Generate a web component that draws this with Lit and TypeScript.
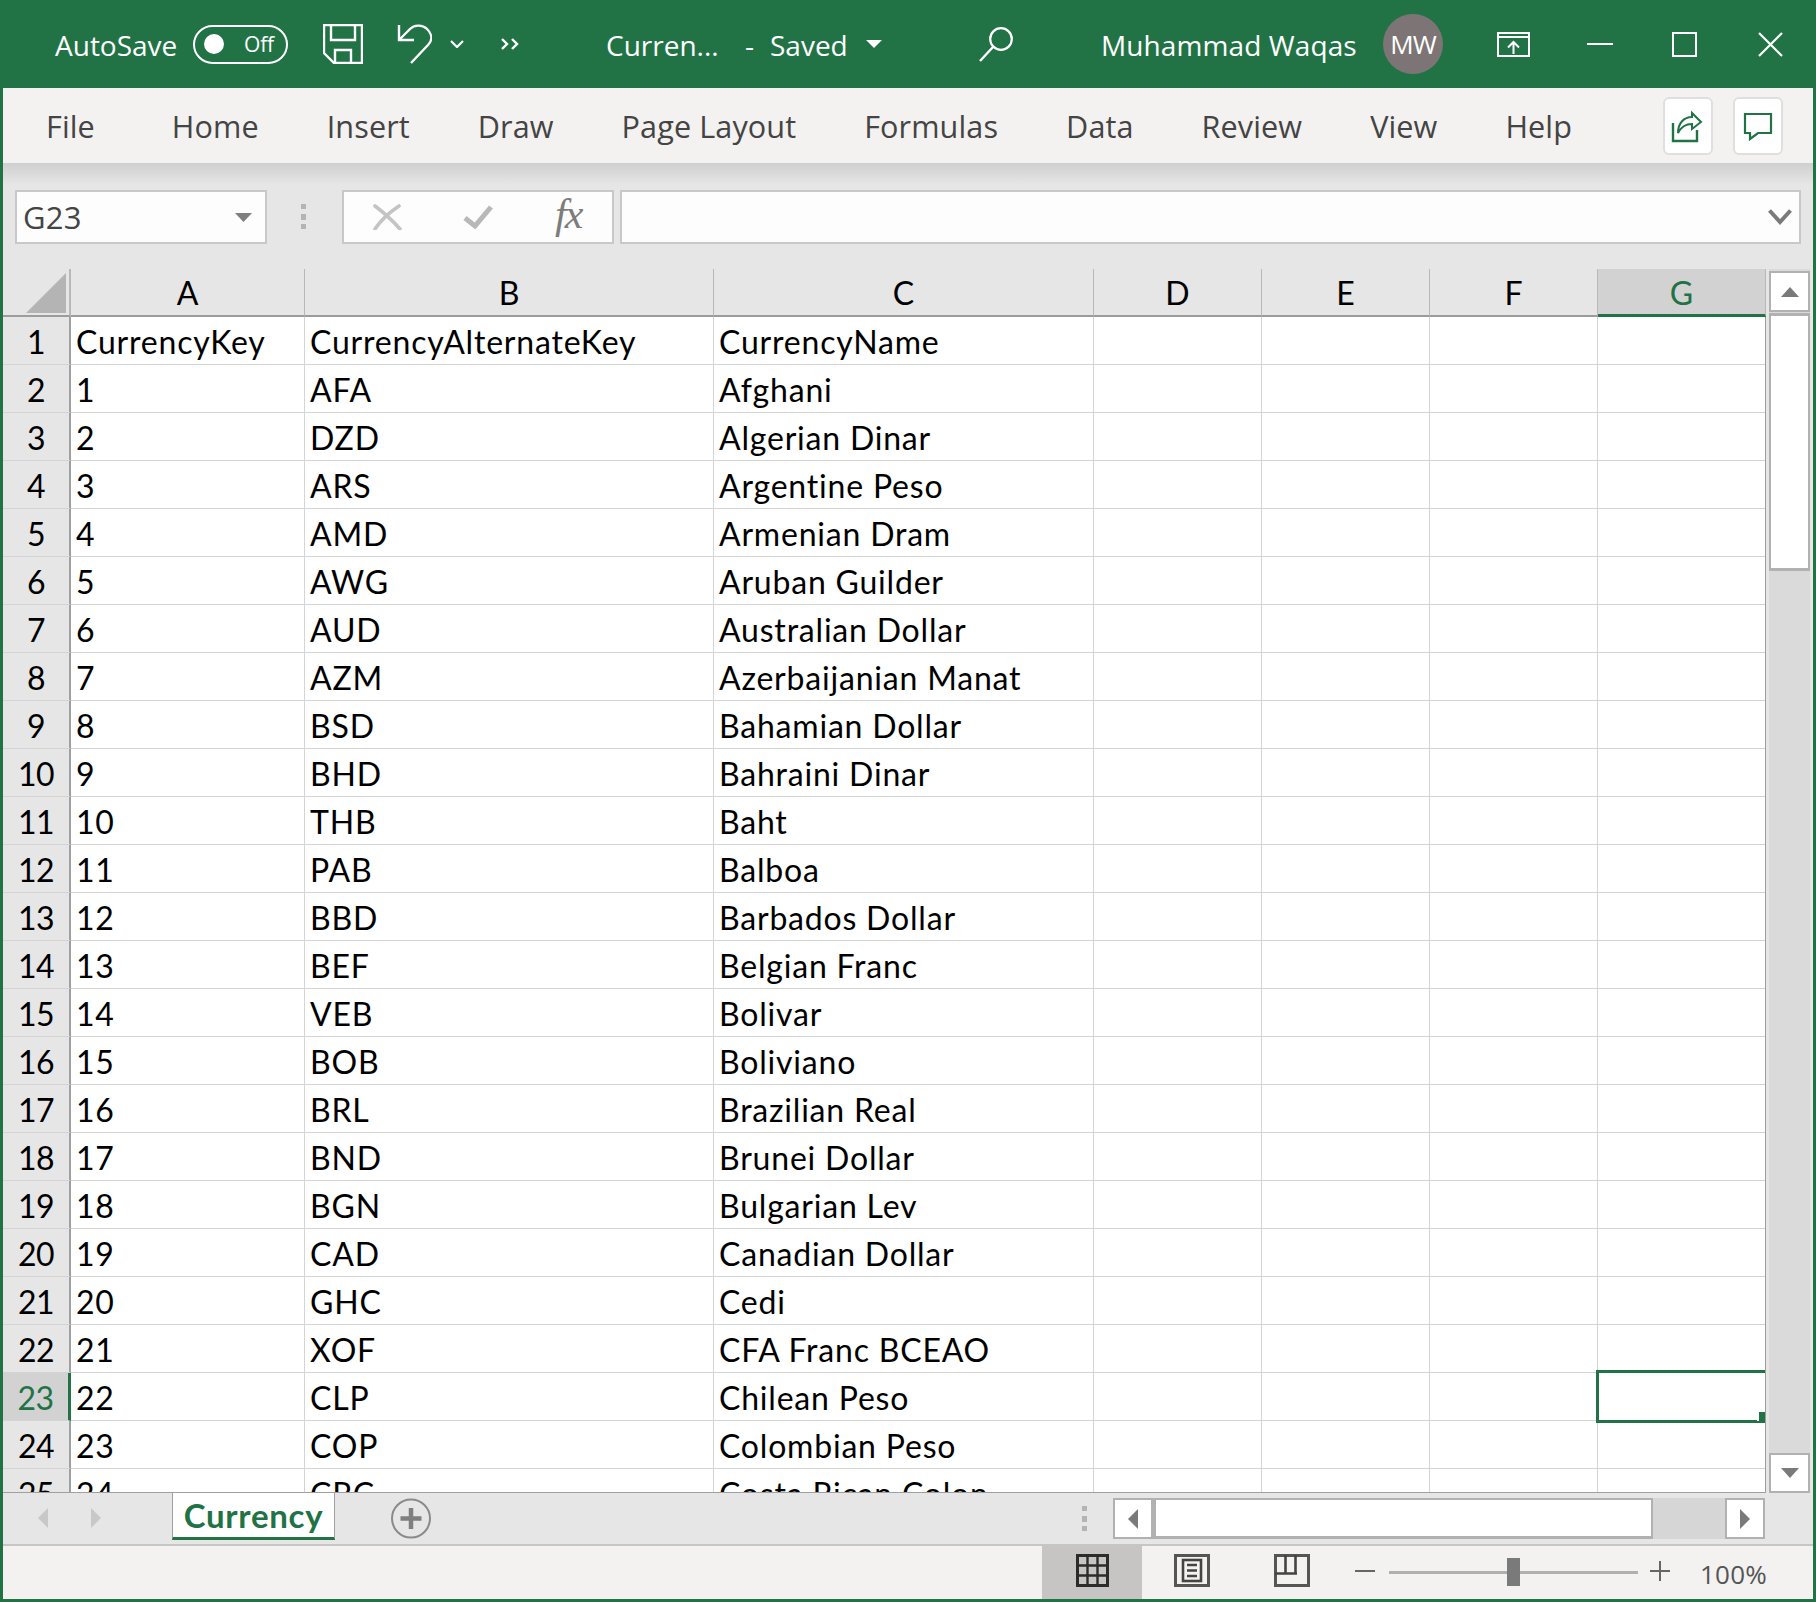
import { LitElement, html, css, svg } from "lit";
import { customElement } from "lit/decorators.js";

const ROWS: [string, string, string][] = [
  ["CurrencyKey", "CurrencyAlternateKey", "CurrencyName"],
  ["1", "AFA", "Afghani"],
  ["2", "DZD", "Algerian Dinar"],
  ["3", "ARS", "Argentine Peso"],
  ["4", "AMD", "Armenian Dram"],
  ["5", "AWG", "Aruban Guilder"],
  ["6", "AUD", "Australian Dollar"],
  ["7", "AZM", "Azerbaijanian Manat"],
  ["8", "BSD", "Bahamian Dollar"],
  ["9", "BHD", "Bahraini Dinar"],
  ["10", "THB", "Baht"],
  ["11", "PAB", "Balboa"],
  ["12", "BBD", "Barbados Dollar"],
  ["13", "BEF", "Belgian Franc"],
  ["14", "VEB", "Bolivar"],
  ["15", "BOB", "Boliviano"],
  ["16", "BRL", "Brazilian Real"],
  ["17", "BND", "Brunei Dollar"],
  ["18", "BGN", "Bulgarian Lev"],
  ["19", "CAD", "Canadian Dollar"],
  ["20", "GHC", "Cedi"],
  ["21", "XOF", "CFA Franc BCEAO"],
  ["22", "CLP", "Chilean Peso"],
  ["23", "COP", "Colombian Peso"],
  ["24", "CRC", "Costa Rican Colon"],
];
const COLS = ["A", "B", "C", "D", "E", "F", "G"];

const icon = (w: number, h: number, body: unknown, cls = "") =>
  html`<svg class=${cls} width=${w} height=${h} viewBox="0 0 ${w} ${h}" fill="none">${body}</svg>`;

const W = "#fff";
const G = "#217346";

@customElement("app-root")
export class AppRoot extends LitElement {
  static styles = css`
    :host { display: block; width: 1816px; height: 1602px; }
    svg { display: block; flex: none; }
    .app {
      box-sizing: border-box; width: 1816px; height: 1602px;
      border: solid #217346;
      border-width: 0 3px 3px 3px;
      background: #e6e6e6; display: flex; flex-direction: column; overflow: hidden;
      font-family: "Open Sans", "Noto Sans", sans-serif;
    }
    /* title bar */
    .title { height: 88px; flex: none; background: #217346; color: #fff; display: flex; align-items: center; font-size: 28px; white-space: nowrap; }
    .title > span { display: block; flex: none; margin-top: 2px; }
    .auto { margin-left: 52px; width: 138px; }
    .toggle { box-sizing: border-box; width: 95px; height: 39px; border: 2px solid #fff; border-radius: 20px; display: flex; align-items: center; padding-left: 9px; flex: none; }
    .knob { width: 20px; height: 20px; border-radius: 50%; background: #fff; flex: none; }
    .off { font-size: 21px; margin-left: 20px; letter-spacing: -0.2px; }
    .save { margin-left: 35px; }
    .undo { margin-left: 34px; }
    .chev { margin-left: 18px; }
    .more { margin-left: 37px; }
    .doc { margin-left: 87px; width: 139px; }
    .dash { width: 25px; }
    .saved { width: 96px; }
    .search { margin-left: 97px; margin-top: 1px; }
    .name { margin-left: 88px; width: 282px; letter-spacing: 0.1px; }
    .avatar { width: 60px; height: 60px; border-radius: 50%; background: #7d7575; display: flex; align-items: center; justify-content: center; font-size: 26px; flex: none; letter-spacing: -1px; }
    .rd { margin-left: 54px; }
    .min { margin-left: 57px; }
    .max { margin-left: 59px; }
    .close { margin-left: 61px; }
    /* ribbon */
    .ribbon { height: 75px; flex: none; background: #f3f2f1; display: flex; align-items: center; padding: 0 30px 0 43px; color: #444; font-size: 30.6px; white-space: nowrap; box-sizing: border-box; }
    .tabs { display: flex; gap: 68px; margin-top: 1px; letter-spacing: 0.1px; }
    .tabs span:first-child { margin-right: 9px; }
    .rbtns { margin-left: auto; display: flex; gap: 20px; }
    .rbtn { box-sizing: border-box; width: 50px; height: 58px; background: #fff; border: 2px solid #e1dfdd; border-radius: 6px; flex: none; }
    .rbtn svg { margin: -2px; }
    /* formula bar */
    .fbar { height: 106px; flex: none; box-sizing: border-box; padding: 27px 12px 25px 12px; display: flex; background: linear-gradient(#cfcfcf 0, #e6e6e6 22px); }
    .box { box-sizing: border-box; height: 54px; background: #fdfdfd; border: 2px solid #c8c8c8; flex: none; display: flex; align-items: center; }
    .namebox { width: 252px; padding-left: 6px; font-size: 31px; color: #444; }
    .namebox .txt { flex: 1; letter-spacing: 0.2px; }
    .namebox svg { margin-right: 13px; }
    .vdots { margin-left: 34px; margin-top: 14px; }
    .fxbox { width: 272px; margin-left: 36px; }
    .fxbox .x { margin-left: 29px; }
    .fxbox .ok { margin-left: 61px; }
    .fx { font-family: "Liberation Serif", serif; font-style: italic; font-size: 42px; color: #7c7c7c; margin-left: 62px; line-height: 1; margin-top: -6px; letter-spacing: -2px; }
    .finput { flex: 1; margin-left: 6px; justify-content: flex-end; padding-right: 7px; }
    /* sheet */
    .sheet { height: 1224px; flex: none; display: flex; }
    .gridwrap { width: 1763px; height: 1224px; overflow: hidden; position: relative; flex: none; }
    .grid { display: grid; grid-template-columns: 68px 234px 409px 380px 168px 168px 168px 168px; grid-auto-rows: 48px; background: #fff; font-family: Lato, "Open Sans", sans-serif; font-size: 32px; color: #000; }
    .gc { box-sizing: border-box; border-right: 1px solid #d4d4d4; border-bottom: 1px solid #d4d4d4; display: flex; align-items: center; padding: 1px 0 0 5px; white-space: nowrap; overflow: hidden; letter-spacing: 0.8px; }
    .rh { box-sizing: border-box; background: #e6e6e6; border-right: 2px solid #a0a0a0; border-bottom: 1px solid #d4d4d4; display: flex; align-items: center; justify-content: center; padding-top: 1px; letter-spacing: -0.5px; }
    .rh.sel { background: #d2d2d2; color: #217346; border-right: 3px solid #217346; }
    .ch { box-sizing: border-box; background: #e6e6e6; border-right: 1px solid #b8b8b8; border-bottom: 2px solid #9c9c9c; display: flex; align-items: center; justify-content: center; padding-top: 1px; }
    .ch.corner { border-right: 2px solid #b8b8b8; align-items: flex-start; justify-content: flex-start; padding: 4px 0 0 23px; }
    .ch.sel { background: #d2d2d2; color: #217346; border-bottom: 3px solid #217346; }
    .ch:last-child { border-right: 1px solid #9c9c9c; }
    .gline { position: absolute; left: 1762px; top: 48px; bottom: 0; width: 1px; background: #9c9c9c; }
    .cellsel { position: absolute; left: 1593px; top: 1101px; width: 169px; height: 53px; box-sizing: border-box; border: 3px solid #217346; border-right: 0; }
    .handle { position: absolute; right: 0; bottom: -1px; width: 6px; height: 9px; background: #217346; border-left: 2px solid #fff; }
    .gridbottom { position: absolute; left: 0; right: 0; bottom: 0; height: 1px; background: #a0a0a0; }
    /* v scroll */
    .vs { margin-left: 3px; width: 41px; display: flex; flex-direction: column; background: #dadada; padding-top: 2px; box-sizing: border-box; height: 1224px; flex: none; }
    .sb { box-sizing: border-box; background: #fff; border: 2px solid #b1b1b1; display: flex; align-items: center; justify-content: center; flex: none; }
    .vs .up { height: 41px; }
    .vs .thumb { height: 258px; margin-top: 1px; border-width: 3px 2px; }
    .vs .down { height: 40px; margin-top: auto; }
    /* tabs */
    .sheets { height: 53px; flex: none; box-sizing: border-box; border-bottom: 2px solid #c8c6c4; display: flex; align-items: flex-start; background: #e6e6e6; }
    .nav1 { margin: 15px 0 0 35px; }
    .nav2 { margin: 15px 0 0 43px; }
    .stab { margin-left: 71px; box-sizing: border-box; width: 163px; height: 47px; background: #fff; border: solid #a0a0a0; border-width: 0 1px 0 1px; border-bottom: 3px solid #217346; color: #217346; font-family: Lato, sans-serif; font-weight: 700; font-size: 33px; letter-spacing: 0.7px; display: flex; align-items: center; justify-content: center; padding-bottom: 1px; flex: none; }
    .plus { margin: 5px 0 0 56px; }
    .hdots { margin: 13px 0 0 651px; }
    .hs { margin: 5px 0 0 26px; display: flex; width: 652px; height: 41px; background: #d6d6d6; }
    .hs .l, .hs .r { width: 40px; }
    .hs .r { margin-left: auto; }
    .hs .hthumb { width: 500px; border-width: 2px 2px 3px 3px; }
    /* status */
    .status { height: 53px; flex: none; background: #f3f2f1; display: flex; align-items: flex-start; }
    .vbtn { margin-left: 1039px; width: 100px; height: 53px; background: #c6c5c3; display: flex; justify-content: center; padding-top: 8px; box-sizing: border-box; flex: none; }
    .page1 { margin: 8px 0 0 32px; }
    .page2 { margin: 8px 0 0 64px; }
    .minus { margin: 24px 0 0 45px; }
    .slider { margin: 12px 0 0 14px; width: 249px; height: 28px; position: relative; flex: none; display: flex; align-items: center; }
    .track { height: 3px; width: 100%; background: #b0b0b0; }
    .sthumb { position: absolute; left: 118px; top: 0; width: 13px; height: 28px; background: #7a7a7a; }
    .zplus { margin: 15px 0 0 12px; }
    .zoom { margin: 8px 0 0 30px; font-size: 26px; color: #555; line-height: 40px; letter-spacing: 0.2px; }
  `;

  render() {
    return html`<div class="app">
      ${this.titleBar()}
      <div class="ribbon">
        <div class="tabs">
          ${["File", "Home", "Insert", "Draw", "Page Layout", "Formulas", "Data", "Review", "View", "Help"].map((t) => html`<span>${t}</span>`)}
        </div>
        <div class="rbtns">
          <div class="rbtn">${icon(50, 58, svg`<path d="M10 26V44H34V33" stroke="${G}" stroke-width="2.4"/><path d="M15 36C15 26 21 20 29 20V16L38 25L29 32V27C23 27 18 30 15 36Z" stroke="${G}" stroke-width="2"/>`)}</div>
          <div class="rbtn">${icon(50, 58, svg`<path d="M12 17H38V36H25L17 42V36H12Z" stroke="${G}" stroke-width="2.2"/>`)}</div>
        </div>
      </div>
      <div class="fbar">
        <div class="box namebox"><span class="txt">G23</span>${icon(17, 9, svg`<path d="M0 0H17L8.5 9Z" fill="#7f7f7f"/>`)}</div>
        ${icon(5, 25, svg`<rect width="5" height="5" fill="#b4b4b4"/><rect y="10" width="5" height="6" fill="#b4b4b4"/><rect y="20" width="5" height="5" fill="#b4b4b4"/>`, "vdots")}
        <div class="box fxbox">
          ${icon(29, 26, svg`<path d="M2 2C10 8 20 17 27 25M26 2C17 8 8 16 2 25" stroke="#c4c4c4" stroke-width="3.6" stroke-linecap="round"/>`, "x")}
          ${icon(30, 24, svg`<path d="M2 13L12 21L28 2" stroke="#b8b8b8" stroke-width="5"/>`, "ok")}
          <span class="fx">fx</span>
        </div>
        <div class="box finput">${icon(24, 16, svg`<path d="M1.5 1.5L12 13L22.5 1.5" stroke="#7a7a7a" stroke-width="4"/>`)}</div>
      </div>
      <div class="sheet">
        <div class="gridwrap">
          <div class="grid">
            <div class="ch corner">${icon(40, 40, svg`<path d="M40 0V40H0Z" fill="#b4b4b4"/>`)}</div>
            ${COLS.map((c) => html`<div class="ch ${c === "G" ? "sel" : ""}">${c}</div>`)}
            ${ROWS.map((r, i) => html`
              <div class="rh ${i === 22 ? "sel" : ""}">${i + 1}</div>
              ${r.map((v) => html`<div class="gc">${v}</div>`)}
              <div class="gc"></div><div class="gc"></div><div class="gc"></div><div class="gc"></div>`)}
          </div>
          <div class="gline"></div>
          <div class="cellsel"><div class="handle"></div></div>
          <div class="gridbottom"></div>
        </div>
        <div class="vs">
          <div class="sb up">${icon(18, 10, svg`<path d="M9 0L18 10H0Z" fill="#7a7a7a"/>`)}</div>
          <div class="sb thumb"></div>
          <div class="sb down">${icon(18, 10, svg`<path d="M0 0H18L9 10Z" fill="#7a7a7a"/>`)}</div>
        </div>
      </div>
      <div class="sheets">
        ${icon(10, 20, svg`<path d="M10 0V20L0 10Z" fill="#c8c8c8"/>`, "nav1")}
        ${icon(10, 20, svg`<path d="M0 0V20L10 10Z" fill="#c8c8c8"/>`, "nav2")}
        <div class="stab">Currency</div>
        ${icon(40, 41, svg`<circle cx="20" cy="20.5" r="19" stroke="#8a8a8a" stroke-width="2"/><path d="M20 10V31M9.5 20.5H30.5" stroke="#7f7f7f" stroke-width="4.5"/>`, "plus")}
        ${icon(5, 25, svg`<rect width="5" height="5" fill="#b4b4b4"/><rect y="10" width="5" height="6" fill="#b4b4b4"/><rect y="20" width="5" height="5" fill="#b4b4b4"/>`, "hdots")}
        <div class="hs">
          <div class="sb l">${icon(10, 20, svg`<path d="M10 0V20L0 10Z" fill="#7a7a7a"/>`)}</div>
          <div class="sb hthumb"></div>
          <div class="sb r">${icon(10, 20, svg`<path d="M0 0V20L10 10Z" fill="#7a7a7a"/>`)}</div>
        </div>
      </div>
      <div class="status">
        <div class="vbtn">${icon(33, 33, svg`<rect x="1.5" y="1.5" width="30" height="30" stroke="#2b2b2b" stroke-width="3"/><path d="M11.5 1V32M21.5 1V32M1 11.5H32M1 21.5H32" stroke="#2b2b2b" stroke-width="2.4"/>`)}</div>
        ${icon(36, 33, svg`<rect x="1.5" y="1.5" width="33" height="30" stroke="#555" stroke-width="3"/><rect x="9" y="6" width="18" height="21" stroke="#444" stroke-width="2.6"/><path d="M13 11H23M13 16.5H23M13 22H23" stroke="#444" stroke-width="2.4"/>`, "page1")}
        ${icon(36, 33, svg`<rect x="1.5" y="1.5" width="33" height="30" stroke="#555" stroke-width="3"/><path d="M11.5 1V20M21.5 1V20M1 19.5H23" stroke="#444" stroke-width="2.6"/>`, "page2")}
        ${icon(20, 2, svg`<rect width="20" height="2" fill="#666"/>`, "minus")}
        <div class="slider"><div class="track"></div><div class="sthumb"></div></div>
        ${icon(20, 20, svg`<path d="M10 0V20M0 10H20" stroke="#666" stroke-width="2"/>`, "zplus")}
        <span class="zoom">100%</span>
      </div>
    </div>`;
  }

  titleBar() {
    return html`<div class="title">
      <span class="auto">AutoSave</span>
      <div class="toggle"><div class="knob"></div><span class="off">Off</span></div>
      ${icon(40, 40, svg`<path d="M1 1H39V39H11L1 29Z M8 1V16H32V1 M12 39V26H28V39" stroke="${W}" stroke-width="2.4"/>`, "save")}
      ${icon(35, 40, svg`<path d="M2 1V16H17M2 16L13 5C17 1 25 0 30 5C36 11 35 17 31 21L14 39" stroke="${W}" stroke-width="2.4"/>`, "undo")}
      ${icon(14, 8, svg`<path d="M1 1L7 7L13 1" stroke="${W}" stroke-width="2.2"/>`, "chev")}
      ${icon(18, 12, svg`<path d="M1 1L6 6L1 11M11 1L16 6L11 11" stroke="${W}" stroke-width="2.4"/>`, "more")}
      <span class="doc">Curren...</span>
      <span class="dash">-</span>
      <span class="saved">Saved</span>
      ${icon(16, 8, svg`<path d="M0 0H16L8 8Z" fill="${W}"/>`, "caret")}
      ${icon(34, 35, svg`<circle cx="22" cy="12" r="10.8" stroke="${W}" stroke-width="2.2"/><path d="M14 20L1 34" stroke="${W}" stroke-width="2.4"/>`, "search")}
      <span class="name">Muhammad Waqas</span>
      <div class="avatar">MW</div>
      ${icon(33, 25, svg`<rect x="1" y="1" width="31" height="23" stroke="${W}" stroke-width="2"/><path d="M1 5H32" stroke="${W}" stroke-width="2"/><path d="M16.5 22V11M11 15.5L16.5 10L22 15.5" stroke="${W}" stroke-width="2"/>`, "rd")}
      ${icon(26, 2, svg`<rect width="26" height="2" fill="${W}"/>`, "min")}
      ${icon(25, 25, svg`<rect x="1" y="1" width="23" height="23" stroke="${W}" stroke-width="2"/>`, "max")}
      ${icon(25, 25, svg`<path d="M1 1L24 24M24 1L1 24" stroke="${W}" stroke-width="2.2"/>`, "close")}
    </div>`;
  }
}
